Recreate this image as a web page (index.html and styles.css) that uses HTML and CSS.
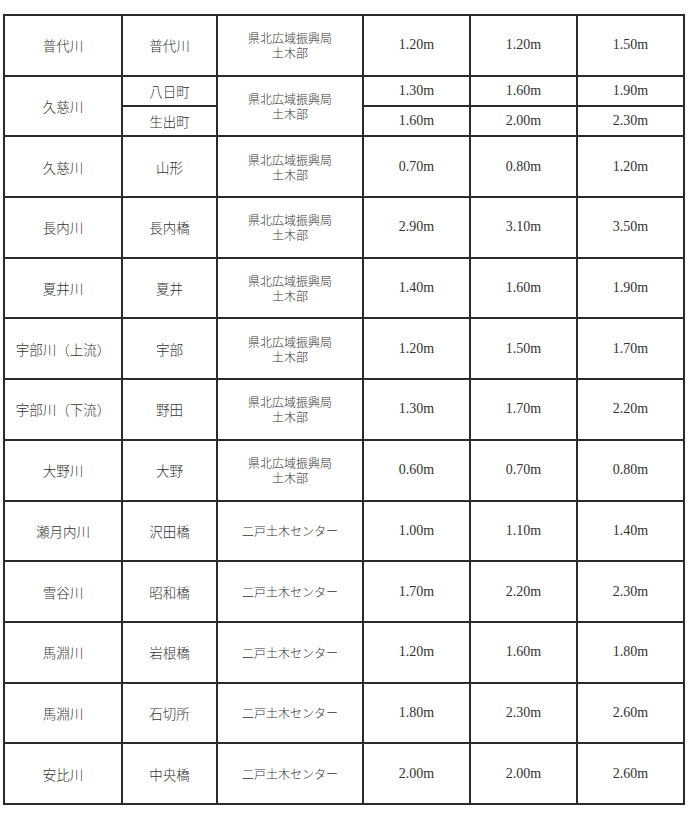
FILE: index.html
```html
<!DOCTYPE html>
<html lang="ja">
<head>
<meta charset="utf-8">
<link rel="stylesheet" href="styles.css">
</head>
<body>
<table class="levels">
  <colgroup>
    <col class="c-river"><col class="c-point"><col class="c-office"><col class="c-num"><col class="c-num"><col class="c-num">
  </colgroup>
  <tbody>
    <tr><td class="jp">普代川</td><td class="jp">普代川</td><td class="office">県北広域振興局<br>土木部</td><td class="num">1.20m</td><td class="num">1.20m</td><td class="num">1.50m</td></tr>
    <tr class="half"><td class="jp" rowspan="2">久慈川</td><td class="jp">八日町</td><td class="office" rowspan="2">県北広域振興局<br>土木部</td><td class="num">1.30m</td><td class="num">1.60m</td><td class="num">1.90m</td></tr>
    <tr class="half"><td class="jp">生出町</td><td class="num">1.60m</td><td class="num">2.00m</td><td class="num">2.30m</td></tr>
    <tr><td class="jp">久慈川</td><td class="jp">山形</td><td class="office">県北広域振興局<br>土木部</td><td class="num">0.70m</td><td class="num">0.80m</td><td class="num">1.20m</td></tr>
    <tr><td class="jp">長内川</td><td class="jp">長内橋</td><td class="office">県北広域振興局<br>土木部</td><td class="num">2.90m</td><td class="num">3.10m</td><td class="num">3.50m</td></tr>
    <tr><td class="jp">夏井川</td><td class="jp">夏井</td><td class="office">県北広域振興局<br>土木部</td><td class="num">1.40m</td><td class="num">1.60m</td><td class="num">1.90m</td></tr>
    <tr><td class="jp">宇部川（上流）</td><td class="jp">宇部</td><td class="office">県北広域振興局<br>土木部</td><td class="num">1.20m</td><td class="num">1.50m</td><td class="num">1.70m</td></tr>
    <tr><td class="jp">宇部川（下流）</td><td class="jp">野田</td><td class="office">県北広域振興局<br>土木部</td><td class="num">1.30m</td><td class="num">1.70m</td><td class="num">2.20m</td></tr>
    <tr><td class="jp">大野川</td><td class="jp">大野</td><td class="office">県北広域振興局<br>土木部</td><td class="num">0.60m</td><td class="num">0.70m</td><td class="num">0.80m</td></tr>
    <tr><td class="jp">瀬月内川</td><td class="jp">沢田橋</td><td class="office">二戸土木センター</td><td class="num">1.00m</td><td class="num">1.10m</td><td class="num">1.40m</td></tr>
    <tr><td class="jp">雪谷川</td><td class="jp">昭和橋</td><td class="office">二戸土木センター</td><td class="num">1.70m</td><td class="num">2.20m</td><td class="num">2.30m</td></tr>
    <tr><td class="jp">馬淵川</td><td class="jp">岩根橋</td><td class="office">二戸土木センター</td><td class="num">1.20m</td><td class="num">1.60m</td><td class="num">1.80m</td></tr>
    <tr><td class="jp">馬淵川</td><td class="jp">石切所</td><td class="office">二戸土木センター</td><td class="num">1.80m</td><td class="num">2.30m</td><td class="num">2.60m</td></tr>
    <tr><td class="jp">安比川</td><td class="jp">中央橋</td><td class="office">二戸土木センター</td><td class="num">2.00m</td><td class="num">2.00m</td><td class="num">2.60m</td></tr>
  </tbody>
</table>
</body>
</html>
```

FILE: styles.css
```css
html, body {
  margin: 0;
  padding: 0;
  background: #ffffff;
}
body {
  padding: 14px 0 0 3px;
}
.levels {
  border-collapse: collapse;
  table-layout: fixed;
  width: 682px;
  color: #333333;
}
.c-river { width: 118px; }
.c-point { width: 95px; }
.c-office { width: 146px; }
.c-num { width: 107px; }
.levels td {
  border: 2px solid #2b2b2b;
  text-align: center;
  vertical-align: middle;
  padding: 0;
  white-space: nowrap;
}
.levels tr {
  height: 60.7px;
}
.levels tr.half {
  height: 30.35px;
}
.jp {
  font-family: "Noto Sans CJK JP", sans-serif;
  font-size: 13.5px;
  font-weight: 300;
  line-height: 16px;
}
.office {
  font-family: "Noto Sans CJK JP", sans-serif;
  font-size: 12px;
  font-weight: 300;
  line-height: 15px;
}
.num {
  font-family: "Liberation Serif", serif;
  font-size: 14px;
  line-height: 16px;
}
```
